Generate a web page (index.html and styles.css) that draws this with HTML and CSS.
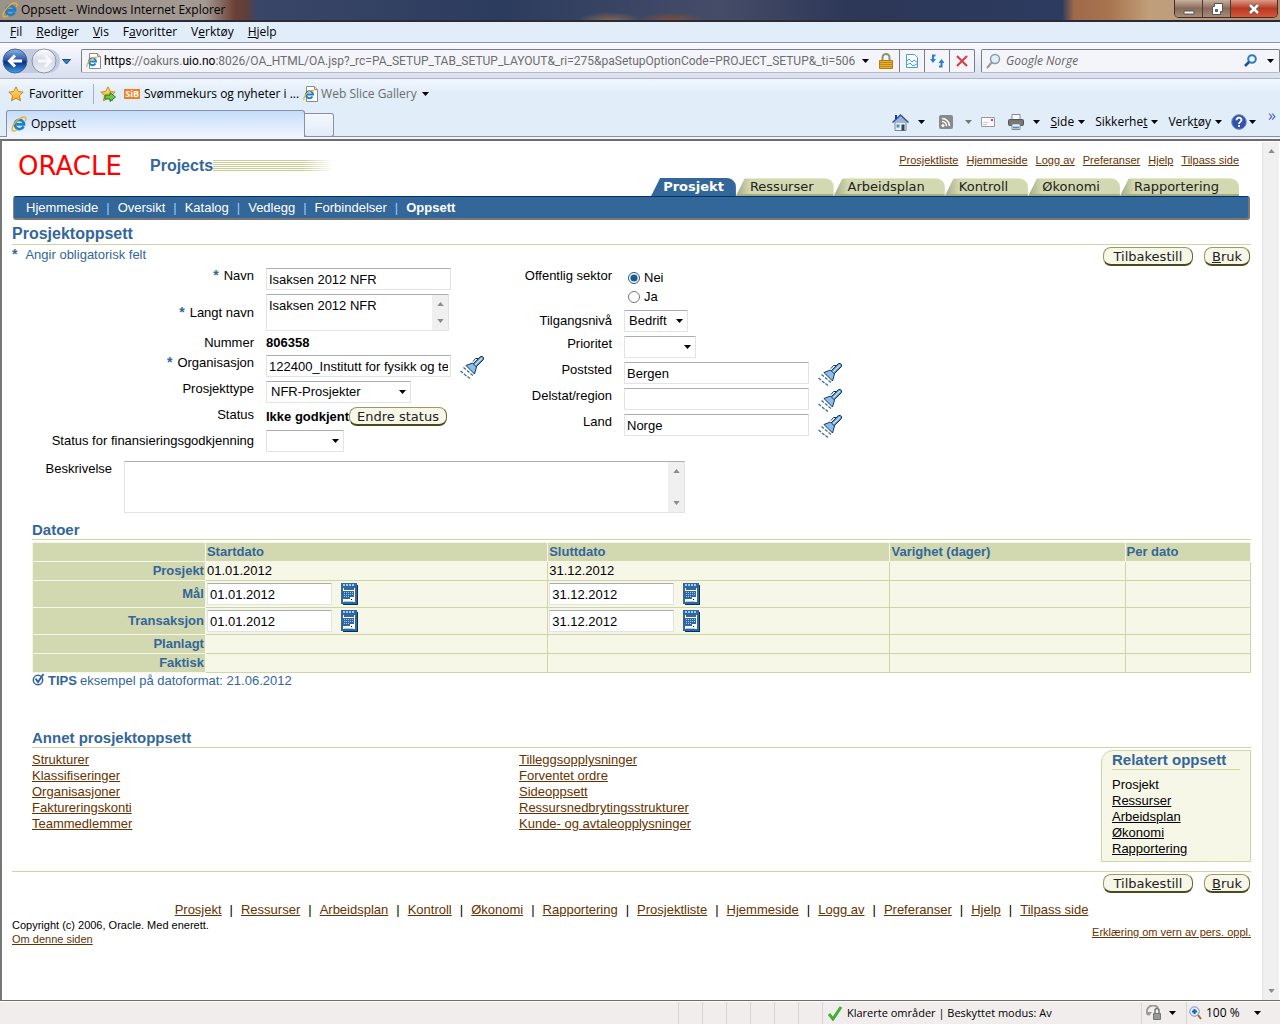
FILE: index.html
```html
<!DOCTYPE html>
<html lang="no">
<head>
<meta charset="utf-8">
<title>Oppsett</title>
<link rel="stylesheet" href="styles.css">
</head>
<body>
<svg class="defs" width="0" height="0" aria-hidden="true">
  <defs>
    <linearGradient id="g-orb" x1="0" y1="0" x2="0" y2="1"><stop offset="0" stop-color="#8fb4e6"/><stop offset=".45" stop-color="#2b57a8"/><stop offset=".55" stop-color="#0a2f86"/><stop offset="1" stop-color="#3fa4f0"/></linearGradient>
    <linearGradient id="g-orb2" x1="0" y1="0" x2="0" y2="1"><stop offset="0" stop-color="#fff"/><stop offset=".5" stop-color="#d5dae6"/><stop offset="1" stop-color="#eef1f8"/></linearGradient>
    <linearGradient id="g-gold" x1="0" y1="0" x2="0" y2="1"><stop offset="0" stop-color="#ffe680"/><stop offset="1" stop-color="#f3a31b"/></linearGradient>
  </defs>
  <symbol id="ie" viewBox="0 0 16 16"><path d="M12.6 10.4A4.6 4.6 0 1 1 13 8.4H5.4" fill="none" stroke="#1a7fd0" stroke-width="2.6"/><path d="M1.6 14.6C-.4 12.200 4 5 9 2.300c3-1.700 5.600-1.800 6 .1.200 1-.3 2-.6 2.600M1.600 14.600c1 .8 3 .2 4.800-.9" fill="none" stroke="#f2b01e" stroke-width="1.400"/></symbol>
  <symbol id="iepage" viewBox="0 0 16 16"><path d="M3.500.5h8l3 3v12h-11z" fill="#fff" stroke="#8a8a8a"/><path d="M11.500.5v3h3" fill="#ddd" stroke="#8a8a8a"/><path d="M9.500 10.500a3.500 3.500 0 1 1 .5-2H4" fill="none" stroke="#1a7fd0" stroke-width="2"/><path d="M1 14C0 12 3 7 7 5c2-1 4-1 4 .4" fill="none" stroke="#f2b01e" stroke-width="1.200"/></symbol>
  <symbol id="star" viewBox="0 0 16 16"><path d="M8 .8l2.200 4.700 5 .6-3.700 3.500 1 5.200L8 12.200l-4.500 2.600 1-5.200L.8 6.100l5-.6z" fill="url(#g-gold)" stroke="#c98a1b"/></symbol>
  <symbol id="down" viewBox="0 0 7 4"><path d="M0 0h7L3.500 4z" fill="currentColor"/></symbol>
  <symbol id="torch" viewBox="0 0 24 24"><path d="M13 9L20.500 1.500h2l1 1v2L16 12z" fill="#5b8fc8" stroke="#0f3766"/><path d="M6 10.500l6.500-2.500L16.500 12 14.500 19z" fill="#8fbbe6" stroke="#0f3766"/><path d="M15 10l7-7" stroke="#cfe4f8" stroke-width="1.500"/><path d="M13 6.500l2.500-3h3" fill="none" stroke="#0f3766"/><path d="M3.500 12.500l2.500 2M7 15.500l2.500 2M10.500 18.500l2.500 2M.5 16l2.500 2M4 19l2.500 2M7.500 21.500l2.500 2" stroke="#36699e" stroke-width="1.200"/></symbol>
  <symbol id="cal" viewBox="0 0 17 22"><path d="M3 2h14v20H2z" fill="#036"/><path d="M0 0h16v21H0z" fill="#369"/><path d="M2 5h12v14H2z" fill="#fff"/><path d="M2 2h12" stroke="#9cf" stroke-width="2" stroke-dasharray="2 1"/><path d="M3 6h10" stroke="#369" stroke-width="2"/><path d="M2 8h11v6H9v2H2z" fill="#369"/><path d="M3 9.500h9M3 11.500h9M3 13.500h6" stroke="#9cf" stroke-dasharray="1 1"/><path d="M3 18.500h9" stroke="#9cf"/><path d="M10 16.500h1" stroke="#000"/></symbol>
  <symbol id="up2" viewBox="0 0 8 5"><path d="M0 5h8L4 0z" fill="#8b8b8b"/></symbol>
  <symbol id="dn2" viewBox="0 0 8 5"><path d="M0 0h8L4 5z" fill="#8b8b8b"/></symbol>
</svg>

<header class="titlebar">
  <svg class="i16"><use href="#ie"/></svg>
  <span class="wintitle">Oppsett - Windows Internet Explorer</span>
  <div class="winbtns">
    <button class="wb" aria-label="Minimer"><svg width="12" height="12"><path d="M1 8h10v3H1z" fill="#fff" stroke="#555"/></svg></button>
    <button class="wb" aria-label="Gjenopprett"><svg width="12" height="12"><path d="M3.500.5h8v8h-2v3h-8v-8h2z" fill="#fff" stroke="#555"/><path d="M4.500 6.500h2v2h-2z" fill="#777" stroke="#555"/></svg></button>
    <button class="wb close" aria-label="Lukk"><svg width="12" height="12"><path d="M2 2l8 8M10 2l-8 8" stroke="#555" stroke-width="4"/><path d="M2 2l8 8M10 2l-8 8" stroke="#fff" stroke-width="2.500"/></svg></button>
  </div>
</header>

<nav class="menubar">
  <span><u>F</u>il</span><span><u>R</u>ediger</span><span><u>V</u>is</span><span>F<u>a</u>voritter</span><span>V<u>e</u>rktøy</span><span><u>H</u>jelp</span>
</nav>

<div class="addressbar">
  <svg width="74" height="28" class="orbs"><path d="M14 2h32a12 12 0 0 1 12 12 12 12 0 0 1-12 12H14" fill="#c3cbe0"/><circle cx="13" cy="14" r="12" fill="url(#g-orb)" stroke="#4a6390"/><path d="M20 14H8m5-5.500L7.500 14l5.500 5.500" fill="none" stroke="#fff" stroke-width="3"/><circle cx="42" cy="14" r="12" fill="url(#g-orb2)" stroke="#8e95a5"/><path d="M36 14h12m-5-5.500l5.500 5.500-5.500 5.500" fill="none" stroke="#f7f9fd" stroke-width="3"/><path d="M60.500 12.500h8l-4 4.500z" fill="#2c7fc4" stroke="#134f86"/></svg>
  <div class="urlbox">
    <svg class="i16"><use href="#iepage"/></svg>
    <span class="url"><b>https</b>://oakurs.<b>uio.no</b>:8026/OA_HTML/OA.jsp?_rc=PA_SETUP_TAB_SETUP_LAYOUT&amp;_ri=275&amp;paSetupOptionCode=PROJECT_SETUP&amp;_ti=506</span>
    <svg class="arr"><use href="#down"/></svg>
    <svg class="lock" width="14" height="16"><path d="M3.500 8V4.500a3.500 3.500 0 0 1 7 0V8" fill="none" stroke="#8d8f76" stroke-width="2"/><path d="M.5 7.500h13v8H.5z" fill="#e5b12c" stroke="#b37a10"/><path d="M1 9.500h12M1 11.500h12M1 13.500h12" stroke="#c08a1b"/></svg>
    <button class="ubtn" aria-label="Kompatibilitetsvisning"><svg width="12" height="14"><path d="M.5.500h8l3 3v10H.5z" fill="#fff" stroke="#4a9cd4"/><path d="M0 8l3-3 3 3 2-2 4 3M1 11l3-2 3 3 4-2" fill="none" stroke="#4a9cd4"/></svg></button>
    <button class="ubtn" aria-label="Oppdater"><svg width="14" height="14"><path d="M5.500 1.500H3V6M9 12.500h2.500V8" fill="none" stroke="#2a80c8" stroke-width="2"/><path d="M0 5h6L3 9zM8.500 9h6l-3-4z" fill="#2a80c8"/></svg></button>
    <button class="ubtn" aria-label="Stopp"><svg width="12" height="12"><path d="M1 1l10 10M11 1L1 11" stroke="#d34545" stroke-width="2.200"/></svg></button>
  </div>
  <div class="searchbox">
    <svg width="15" height="16"><circle cx="9" cy="6" r="4.500" fill="#dff0fb" stroke="#8f98a6" stroke-width="1.500"/><path d="M6 9l-5 6" stroke="#999" stroke-width="2"/></svg>
    <input type="text" placeholder="Google Norge" aria-label="Google Norge">
    <svg width="13" height="13"><circle cx="8" cy="5" r="3.800" fill="none" stroke="#2a7cc4" stroke-width="2"/><path d="M5 8l-4 4" stroke="#1c4e96" stroke-width="2.500"/></svg>
    <svg class="arr"><use href="#down"/></svg>
  </div>
</div>

<div class="favbar">
  <svg class="i16"><use href="#star"/></svg><span class="fav">Favoritter</span>
  <svg class="i16 add" viewBox="0 0 16 16"><use href="#star"/><path d="M5 9h5V6.500l5.500 4.500L10 15.500V13H5z" fill="#6cc644" stroke="#2d7d1c"/></svg>
  <span class="sib">SiB</span><span>Svømmekurs og nyheter i ...</span>
  <svg class="i16 slice"><use href="#iepage"/></svg><span class="dim">Web Slice Gallery</span><svg class="arr"><use href="#down"/></svg>
</div>

<div class="tabrow">
  <div class="btab"><svg class="i16"><use href="#ie"/></svg>Oppsett</div>
  <button class="newtab" aria-label="Ny fane"></button>
  <div class="cmds">
    <svg width="17" height="17"><path d="M3 8h11v8.500H3z" fill="#e8eef8" stroke="#7a89a8"/><path d="M.500 8.500L8.500 1l8 7.500" fill="#9eb2d6" stroke="#33508e" stroke-width="1.400"/><path d="M3 1h2v4H3z" fill="#2433b0"/><path d="M9.500 10.500h3v6h-3z" fill="#345"/><path d="M4.500 10.500h3v3h-3z" fill="#49a"/></svg>
    <svg class="arr"><use href="#down"/></svg>
    <svg class="feed" width="14" height="14"><rect width="14" height="14" rx="2" fill="#8a8a8a"/><circle cx="4" cy="10.500" r="1.500" fill="#fff"/><path d="M3 6.500a4.500 4.500 0 0 1 4.500 4.500M3 3.500a7.500 7.500 0 0 1 7.500 7.500" fill="none" stroke="#fff" stroke-width="1.500"/></svg>
    <svg class="arr grey"><use href="#down"/></svg>
    <svg class="mail" width="14" height="10"><path d="M.500.500h13v9H.500z" fill="#fff" stroke="#999"/><path d="M10 2h2v2h-2z" fill="#e33"/><path d="M2 5.500h5M2 7.500h4" stroke="#ccc"/></svg>
    <svg class="prn" width="16" height="16"><path d="M4 .5h8V6H4z" fill="#fff" stroke="#888"/><rect x=".5" y="5.500" width="15" height="6" rx="1" fill="#777" stroke="#555"/><path d="M4 10h8v5.500H4z" fill="#fff" stroke="#888"/><path d="M5 13.500h6" stroke="#39c" stroke-width="2"/></svg>
    <svg class="arr"><use href="#down"/></svg>
    <span class="cmd"><u>S</u>ide <svg class="arr"><use href="#down"/></svg></span>
    <span class="cmd">Sikkerhe<u>t</u> <svg class="arr"><use href="#down"/></svg></span>
    <span class="cmd">Verk<u>t</u>øy <svg class="arr"><use href="#down"/></svg></span>
    <svg class="help" width="16" height="16"><circle cx="8" cy="8" r="7.400" fill="#2d52b0" stroke="#8c9bb8"/><path d="M5.500 6.300C5.500 2.800 10.500 3 10.500 6c0 2-2.500 1.800-2.500 4M8 11v2" fill="none" stroke="#fff" stroke-width="1.800"/></svg>
    <svg class="arr nogap"><use href="#down"/></svg>
    <span class="more">»</span>
  </div>
</div>

<div class="viewport">
<main class="page">
  <div class="masthead">
    <div class="brand"><span class="logo">ORACLE</span><span class="product">Projects</span><i class="stripes"></i></div>
    <div class="mast-right">
      <nav class="global"><a href="#">Prosjektliste</a><a href="#">Hjemmeside</a><a href="#">Logg av</a><a href="#">Preferanser</a><a href="#">Hjelp</a><a href="#">Tilpass side</a></nav>
      <nav class="tabs"><a href="#" class="on">Prosjekt</a><a href="#">Ressurser</a><a href="#">Arbeidsplan</a><a href="#">Kontroll</a><a href="#">Økonomi</a><a href="#">Rapportering</a></nav>
    </div>
  </div>
  <nav class="subnav"><a href="#">Hjemmeside</a><i>|</i><a href="#">Oversikt</a><i>|</i><a href="#">Katalog</a><i>|</i><a href="#">Vedlegg</a><i>|</i><a href="#">Forbindelser</a><i>|</i><a href="#" class="cur">Oppsett</a></nav>
  <h1>Prosjektoppsett</h1>
  <div class="actions top"><p class="hint"><b class="req">*</b>Angir obligatorisk felt</p><div class="btns"><button class="wide">Tilbakestill</button><button><u>B</u>ruk</button></div></div>

  <form class="forms">
    <div class="col left">
      <div class="row"><label for="navn"><b class="req">*</b>Navn</label><input id="navn" type="text" value="Isaksen 2012 NFR"></div>
      <div class="row mid"><label for="lnavn"><b class="req">*</b>Langt navn</label><div class="area small"><textarea id="lnavn">Isaksen 2012 NFR</textarea><span class="sb"><svg><use href="#up2"/></svg><svg><use href="#dn2"/></svg></span></div></div>
      <div class="row"><span class="lbl">Nummer</span><strong>806358</strong></div>
      <div class="row"><label for="org"><b class="req">*</b>Organisasjon</label><div class="lov"><input id="org" type="text" value="122400_Institutt for fysikk og teknologi"><a href="#" aria-label="Søk organisasjon"><svg><use href="#torch"/></svg></a></div></div>
      <div class="row"><label for="ptype">Prosjekttype</label><select id="ptype" class="w144"><option>NFR-Prosjekter</option></select></div>
      <div class="row"><span class="lbl">Status</span><div class="status"><strong>Ikke godkjent</strong><button type="button">Endre status</button></div></div>
      <div class="row mid"><label for="fin">Status for finansieringsgodkjenning</label><select id="fin" class="w78"><option></option></select></div>
    </div>
    <div class="col right">
      <div class="row"><span class="lbl">Offentlig sektor</span><div class="radios"><label><input type="radio" name="sektor" checked>Nei</label><label><input type="radio" name="sektor">Ja</label></div></div>
      <div class="row mid"><label for="niva">Tilgangsnivå</label><select id="niva" class="w64"><option>Bedrift</option></select></div>
      <div class="row"><label for="prio">Prioritet</label><select id="prio" class="w72"><option></option></select></div>
      <div class="row"><label for="sted">Poststed</label><div class="lov"><input id="sted" type="text" value="Bergen"><a href="#" aria-label="Søk poststed"><svg><use href="#torch"/></svg></a></div></div>
      <div class="row"><label for="region">Delstat/region</label><div class="lov"><input id="region" type="text"><a href="#" aria-label="Søk delstat"><svg><use href="#torch"/></svg></a></div></div>
      <div class="row"><label for="land">Land</label><div class="lov"><input id="land" type="text" value="Norge"><a href="#" aria-label="Søk land"><svg><use href="#torch"/></svg></a></div></div>
    </div>
  </form>
  <div class="row desc"><label for="besk">Beskrivelse</label><div class="area large"><textarea id="besk"></textarea><span class="sb"><svg><use href="#up2"/></svg><svg><use href="#dn2"/></svg></span></div></div>

  <section class="inset">
    <h2>Datoer</h2>
    <table class="dates">
      <colgroup><col class="k1"><col class="k2"><col class="k2"><col class="k4"><col></colgroup>
      <thead><tr><th></th><th>Startdato</th><th>Sluttdato</th><th>Varighet (dager)</th><th>Per dato</th></tr></thead>
      <tbody>
        <tr><th>Prosjekt</th><td>01.01.2012</td><td>31.12.2012</td><td></td><td></td></tr>
        <tr class="tall"><th>Mål</th><td><div class="date"><input type="text" aria-label="Mål startdato" value="01.01.2012"><svg><use href="#cal"/></svg></div></td><td><div class="date"><input type="text" aria-label="Mål sluttdato" value="31.12.2012"><svg><use href="#cal"/></svg></div></td><td></td><td></td></tr>
        <tr class="tall"><th>Transaksjon</th><td><div class="date"><input type="text" aria-label="Transaksjon startdato" value="01.01.2012"><svg><use href="#cal"/></svg></div></td><td><div class="date"><input type="text" aria-label="Transaksjon sluttdato" value="31.12.2012"><svg><use href="#cal"/></svg></div></td><td></td><td></td></tr>
        <tr><th>Planlagt</th><td></td><td></td><td></td><td></td></tr>
        <tr><th>Faktisk</th><td></td><td></td><td></td><td></td></tr>
      </tbody>
    </table>
    <p class="tips"><svg width="13" height="13"><circle cx="6" cy="7" r="4.700" fill="#fff" stroke="#369" stroke-width="1.500"/><path d="M3.500 5.500L6 9l5.500-8" fill="none" stroke="#369" stroke-width="2"/></svg><b>TIPS</b> eksempel på datoformat: 21.06.2012</p>
  </section>

  <section class="inset other">
    <h2>Annet prosjektoppsett</h2>
    <div class="linkgrid">
      <ul><li><a href="#">Strukturer</a></li><li><a href="#">Klassifiseringer</a></li><li><a href="#">Organisasjoner</a></li><li><a href="#">Faktureringskonti</a></li><li><a href="#">Teammedlemmer</a></li></ul>
      <ul><li><a href="#">Tilleggsopplysninger</a></li><li><a href="#">Forventet ordre</a></li><li><a href="#">Sideoppsett</a></li><li><a href="#">Ressursnedbrytingsstrukturer</a></li><li><a href="#">Kunde- og avtaleopplysninger</a></li></ul>
      <aside class="related"><h3>Relatert oppsett</h3><ul><li>Prosjekt</li><li><a href="#">Ressurser</a></li><li><a href="#">Arbeidsplan</a></li><li><a href="#">Økonomi</a></li><li><a href="#">Rapportering</a></li></ul></aside>
    </div>
  </section>

  <div class="actions bottom"><div class="btns"><button class="wide">Tilbakestill</button><button><u>B</u>ruk</button></div></div>
  <nav class="footlinks"><a href="#">Prosjekt</a><i>|</i><a href="#">Ressurser</a><i>|</i><a href="#">Arbeidsplan</a><i>|</i><a href="#">Kontroll</a><i>|</i><a href="#">Økonomi</a><i>|</i><a href="#">Rapportering</a><i>|</i><a href="#">Prosjektliste</a><i>|</i><a href="#">Hjemmeside</a><i>|</i><a href="#">Logg av</a><i>|</i><a href="#">Preferanser</a><i>|</i><a href="#">Hjelp</a><i>|</i><a href="#">Tilpass side</a></nav>
  <footer class="legal"><div>Copyright (c) 2006, Oracle. Med enerett.<br><a href="#">Om denne siden</a></div><a href="#">Erklæring om vern av pers. oppl.</a></footer>
</main>
<div class="sb pagesb"><svg><use href="#up2"/></svg><svg><use href="#dn2"/></svg></div>
</div>

<footer class="statusbar">
  <i></i><i></i><i></i><i></i><i></i><i></i>
  <div class="zone"><svg width="16" height="16"><path d="M2 9l4 5L14 2" fill="none" stroke="#3fb034" stroke-width="3"/></svg>Klarerte områder | Beskyttet modus: Av</div>
  <div class="prot"><svg width="17" height="16"><path d="M2 10a6 6 0 0 1 10-7" fill="none" stroke="#999" stroke-width="2"/><path d="M0 7l3 4 3-4z" fill="#999"/><path d="M7.500 8.500h7v6h-7z" fill="#999" stroke="#777"/><path d="M9 8V5.500a2 2 0 0 1 4 0V8" fill="none" stroke="#777" stroke-width="1.500"/></svg><svg class="arr"><use href="#down"/></svg></div>
  <div class="zoom"><svg width="13" height="14"><circle cx="5.500" cy="5.500" r="4.700" fill="#dff0ff" stroke="#6f8fb0"/><path d="M9 9l3 4" stroke="#a86a2a" stroke-width="2"/><path d="M5.500 3v5M3 5.500h5" stroke="#1560c8" stroke-width="2"/></svg><span>100 %</span><svg class="arr"><use href="#down"/></svg></div>
</footer>
</body>
</html>
```
FILE: styles.css
```css
* { box-sizing: border-box; }
body { margin: 0; min-height: 100vh; display: flex; flex-direction: column; background: #fff; font: 13px/16px "Liberation Sans", Arial, sans-serif; color: #000; }
h1, h2, h3, p, ul { margin: 0; padding: 0; }
ul { list-style: none; }
svg { display: block; flex: none; }
.defs { position: absolute; }
i { font-style: normal; }
.i16 { width: 16px; height: 16px; }
.arr { width: 7px; height: 4px; }
.titlebar, .menubar, .addressbar, .favbar, .tabrow, .statusbar { font: 12px/16px "Open Sans", "Noto Sans", sans-serif; display: flex; align-items: center; flex: none; white-space: nowrap; }

/* Window frame */
.titlebar { height: 22px; border-bottom: 2px solid #2b2b35; background:
  radial-gradient(ellipse 34px 10px at 610px 22px, #8f6a4c, transparent),
  radial-gradient(ellipse 36px 10px at 672px 22px, #8a5034, transparent),
  linear-gradient(90deg, #9c928c 0, #a39a94 205px, #6a4034 235px, #5b4040 248px, #3a4668 256px, #2c3c5e 500px, #454c68 720px, #2d3757 850px, #2c3b60 1062px, #a0694a 1074px, #a8754f 1110px, #c0a07c 1150px, #b09070 1280px); }
.titlebar > .i16 { margin-left: 2px; }
.wintitle { margin-left: 3px; }
.winbtns { display: flex; margin-left: auto; margin-right: 2px; align-self: flex-start; border: 1px solid #3d2f2a; border-top: 0; border-radius: 0 0 5px 5px; overflow: hidden; }
.wb { width: 28px; height: 17px; border: 0; border-right: 1px solid #4a3a34; padding: 0; display: flex; align-items: center; justify-content: center; background: linear-gradient(#c8b0a0, #8a6a58 50%, #a58c7a); }
.wb.close { width: 46px; border-right: 0; background: linear-gradient(#dc9a88, #b63a22 50%, #d8563a); }
.menubar { height: 21px; padding-left: 10px; gap: 14px; background: #e1edf9; border-bottom: 1px solid #9094a8; }
.addressbar { height: 36px; padding: 0 0 0 2px; background: linear-gradient(#fafaff, #d9dff0); border-bottom: 1px solid #b0b4cc; }
.orbs { margin-right: 5px; }
.urlbox, .searchbox { height: 24px; border: 1px solid #7a7c86; border-bottom-color: #b8bac4; background: #f4f5fb; display: flex; align-items: center; border-radius: 2px; }
.urlbox { flex: 1; min-width: 0; padding-left: 4px; }
.url { flex: 1; min-width: 0; overflow: hidden; margin-left: 2px; font-family: Roboto, "Open Sans", sans-serif; color: #6d6d6d; }
.url b { font-weight: 400; color: #000; }
.urlbox .arr { margin: 0 10px 0 0; }
.lock { margin-right: 6px; }
.ubtn { width: 25px; height: 22px; padding: 0; border: 0; border-left: 1px solid #7a7c86; background: none; display: flex; align-items: center; justify-content: center; }
.searchbox { width: 299px; margin-left: 6px; padding: 0 5px 0 4px; }
.searchbox input[type=text] { flex: 1; min-width: 0; border: 0; background: none; font: italic 12px/16px "Open Sans", "Noto Sans", sans-serif; padding: 0 0 0 5px; }
.searchbox input::placeholder { color: #666; opacity: 1; }
.searchbox .arr { margin-left: 10px; }
.favbar { height: 30px; padding-left: 8px; background: linear-gradient(#f2f7fe, #e1edf9 14px); }
.fav { padding: 2px 10px 2px 5px; border-right: 1px solid #a9afba; }
.add { margin: 0 8px 0 6px; }
.sib { background: #ee7f22; color: #fff; font-weight: 700; font-size: 9px; line-height: 10px; padding: 0 1px; margin-right: 4px; }
.slice { margin: 0 2px 0 4px; }
.dim { color: #6d6d6d; margin-right: 5px; }
.tabrow { height: 30px; padding-left: 6px; background: linear-gradient(#e1edf9 27px, #8b8fa4 27px, #8b8fa4 28px, #f1f4fb 28px); align-items: flex-start; }
.btab { width: 299px; height: 27px; margin-top: 1px; border: 1px solid #8b8fa4; border-bottom: 0; border-radius: 3px 3px 0 0; background: linear-gradient(#c4ddfa, #f1f6fe); display: flex; align-items: center; gap: 4px; padding-left: 4px; }
.newtab { width: 29px; height: 24px; margin-top: 4px; border: 1px solid #8b8fa4; border-left: 0; border-radius: 0 3px 3px 3px; background: linear-gradient(#f4f8fd, #e1edf9); padding: 0; }
.cmds { margin-left: auto; display: flex; align-items: center; height: 26px; padding-right: 4px; }
.cmds .arr { margin-left: 9px; }
.cmds .feed { margin-left: 14px; }
.cmds .grey { color: #777; margin-left: 12px; }
.mail { margin-left: 9px; }
.prn { margin-left: 13px; }
.cmd { display: flex; align-items: center; margin-left: 10px; }
.cmds .cmd .arr { margin-left: 4px; }
.help { margin-left: 9px; }
.cmds .nogap { margin-left: 2px; }
.more { color: #4a5fb0; font-size: 16px; align-self: flex-start; margin-left: 12px; line-height: 12px; }

/* Page area */
.viewport { flex: 1; display: flex; border: solid #6d6d6d; border-width: 2px 0 1px 2px; border-left-color: #777; margin-bottom: 1px; padding-top: 1px; }
.page { flex: 1; min-width: 0; padding: 0 11px 0 10px; }
.sb { width: 17px; background: #f0f0f0; display: flex; flex-direction: column; justify-content: space-between; align-items: center; padding: 7px 0; flex: none; }
.sb svg { width: 7px; height: 4px; }
.pagesb { border-left: 1px solid #e2e2e2; margin-right: 1px; }
a { color: #630; }
.masthead { display: flex; justify-content: space-between; height: 54px; }
.brand { display: flex; align-items: center; padding-left: 6px; height: 48px; }
.logo { font: 26px/24px "DejaVu Sans", "Liberation Sans", sans-serif; color: #f00; width: 132px; }
.product { font-size: 16px; font-weight: 700; color: #369; }
.stripes { width: 120px; height: 12px; background: linear-gradient(90deg, transparent 90px, #fff), repeating-linear-gradient(#cc9 0 1px, #fff 1px 2px); }
.mast-right { display: flex; flex-direction: column; justify-content: space-between; align-items: flex-end; padding: 10px 12px 0 0; }
.global { display: flex; gap: 8px; font-size: 11px; }
.tabs { display: flex; }
.tabs a { height: 18px; font: 13px/16px "DejaVu Sans", sans-serif; color: #222; text-decoration: none; padding: 0 20px 0 14px; background: linear-gradient(90deg, #a5ab85, #d2d8b0 14px); border-top: 1px solid #e6eacb; border-bottom: 2px solid #a5a984; border-top-right-radius: 9px; clip-path: polygon(0 100%, 9px 0, 100% 0, 100% 100%); }
.tabs .on { background: #369; color: #fff; font-weight: 700; border-color: #369; padding: 0 12px; }
.subnav { height: 24px; margin: 0 1px; padding-left: 12px; background: #369; border-top: 1px solid #036; border-bottom: 2px solid #777; border-right: 2px solid #777; border-left: 1px solid #888; border-radius: 3px; display: flex; gap: 8px; align-items: center; color: #9cf; }
.subnav a { color: #fff; text-decoration: none; }
.subnav .cur { font-weight: 700; }
h1 { font-size: 16px; line-height: 20px; padding-top: 4px; color: #369; border-bottom: 1px solid #cfd6a6; }
h2, h3 { font-size: 15px; line-height: 18px; color: #369; border-bottom: 1px solid #cfd6a6; }
.actions { display: flex; justify-content: space-between; }
.top { padding-top: 2px; height: 23px; }
.hint { color: #369; }
.req { color: #369; font-weight: 700; font-size: 14px; line-height: 12px; margin-right: 5px; }
.hint .req { margin-right: 8px; }
.btns { display: flex; gap: 11px; margin-left: auto; padding-right: 1px; }
.btns button, .status button { height: 19px; padding: 0 7px; font: 13px/15px "DejaVu Sans", sans-serif; color: #222; background: #f7f7e7; border: 1px solid #999966; border-bottom: 2px solid #4a4a20; border-right-color: #666633; border-radius: 8px; }
.btns .wide { min-width: 90px; }

.forms { display: flex; }
.col { display: flex; flex-direction: column; gap: 4px; }
.left { width: 488px; }
.row { display: grid; grid-template-columns: 242px 1fr; column-gap: 12px; align-items: start; }
.right .row { grid-template-columns: 112px 1fr; }
.row > label, .lbl { text-align: right; }
.row.mid { align-items: center; }
input[type=text], select, .area { border: 1px solid #e2e3ea; border-top-color: #abadb3; border-radius: 1px; background: #fff; }
.row input[type=text], .date input[type=text] { width: 185px; height: 22px; padding: 0 2px; font: inherit; }
select { appearance: none; height: 22px; padding: 0 4px; font: inherit; color: #000; background: #fff url("data:image/svg+xml,%3Csvg xmlns='http://www.w3.org/2000/svg' width='7' height='4'%3E%3Cpath d='M0 0h7L3.500 4z'/%3E%3C/svg%3E") no-repeat right 4px center; }
.w144 { width: 145px; }
.w78 { width: 78px; }
.w64 { width: 64px; }
.w72 { width: 72px; }
.area { display: flex; }
.area textarea { flex: 1; min-width: 0; border: 0; resize: none; overflow: hidden; padding: 3px 2px; font: inherit; }
.small { width: 183px; height: 37px; }
.area .sb { width: 16px; }
.lov { display: flex; gap: 9px; }
.lov a { height: 22px; }
.lov svg { width: 24px; height: 24px; }
.status { display: flex; align-items: center; }
.radios label { display: flex; align-items: center; gap: 4px; height: 19px; }
.radios input { width: 12px; height: 12px; margin: 0 0 0 4px; accent-color: #1a5a8c; }
.desc { grid-template-columns: 100px 561px; margin-top: 9px; }
.large { height: 52px; }

.inset { margin: 8px 0 0 20px; }
.dates { width: 100%; border-collapse: collapse; table-layout: fixed; margin-top: 2px; background: #f7f7e7; border: 1px solid #cfd6a6; }
.k1 { width: 14.2%; }
.k2 { width: 28.1%; }
.k4 { width: 19.3%; }
.dates th, .dates td { height: 19px; padding: 0 1px; line-height: 16px; border: 1px solid #cfd6a6; }
.dates th { background: #d2d8b0; color: #369; text-align: left; border-color: #f7f7e7; }
.dates tbody th { text-align: right; }
.dates .tall > * { height: 27px; }
.date { display: flex; gap: 9px; align-items: center; }
.date input[type=text] { width: 125px; }
.date svg { width: 17px; height: 22px; }
.tips { display: flex; gap: 3px; color: #369; }
.other { margin-top: 40px; }
.linkgrid { display: grid; grid-template-columns: 487fr 582fr 150px; padding-top: 2px; }
.linkgrid > ul { padding-top: 2px; }
.related { height: 112px; padding: 0 10px; background: #f7f7e7; border: 1px solid #cfd6a6; border-top-left-radius: 12px; }
.related ul { padding-top: 7px; }
.related a { color: #000; }
.bottom { margin-top: 9px; border-top: 1px solid #cfd6a6; padding-top: 2px; }
.footlinks { display: flex; justify-content: center; flex-wrap: wrap; gap: 0 8px; padding: 9px 0 0 0; }
.legal { display: flex; justify-content: space-between; align-items: center; font-size: 11px; line-height: 14px; }

.statusbar { height: 22px; background: #f1edec; justify-content: flex-end; }
.statusbar > i { width: 24px; align-self: stretch; border-left: 1px solid #d8d4d2; }
.zone, .prot, .zoom { display: flex; align-items: center; align-self: stretch; border-left: 1px solid #d8d4d2; padding-left: 4px; gap: 4px; }
.zone { width: 319px; font-size: 11px; }
.prot { width: 45px; gap: 6px; }
.zoom { width: 94px; padding-left: 2px; }
.zoom .arr { margin-left: 10px; }
```
